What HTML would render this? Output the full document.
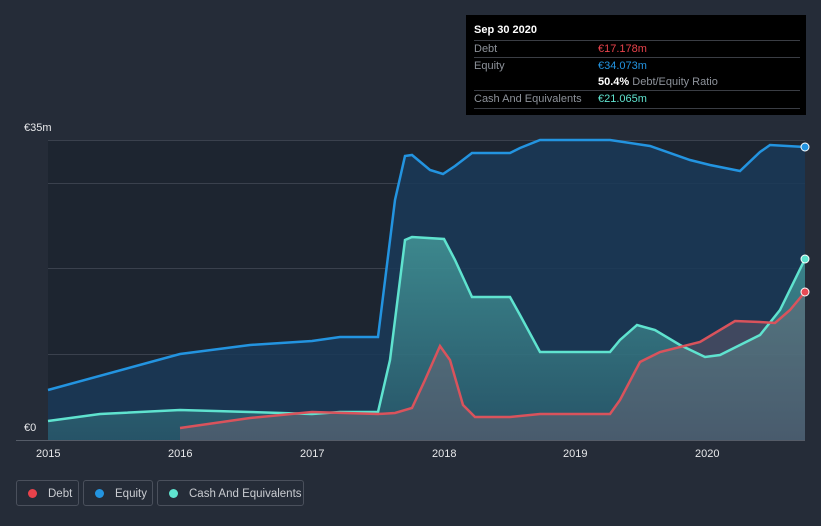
<!DOCTYPE html><html><head><style>body{margin:0;width:821px;height:526px;background:#252c38;font-family:"Liberation Sans",sans-serif;overflow:hidden;position:relative}
.tt{position:absolute;left:466px;top:15px;width:340px;height:100px;background:#000;font-size:11px;color:#8d929a}
.r{position:absolute;left:8px;right:6px;border-top:1px solid #3a3d44;height:17px;line-height:17px}
.l{position:absolute;top:480px;height:26px;border:1px solid #4a505c;border-radius:3px;color:#c9ccd1;font-size:11.5px;line-height:26px;box-sizing:border-box;white-space:nowrap}
.l i{display:inline-block;width:9px;height:9px;border-radius:50%;margin:0 11px 0 11px;vertical-align:-1px}
.ax{position:absolute;top:448px;color:#e8e9eb;font-size:11px}</style></head><body>
<svg width="821" height="526" style="position:absolute;left:0;top:0">
<defs><linearGradient id="g" x1="0" y1="0" x2="0" y2="1"><stop offset="0" stop-color="#5fd9c8" stop-opacity=".5"/><stop offset="1" stop-color="#5fd9c8" stop-opacity=".18"/></linearGradient></defs>
<rect x="48" y="140" width="757" height="300" fill="#1d2530"/>
<g stroke="#3a414d" stroke-width="1"><line x1="48" y1="140.5" x2="805" y2="140.5"/><line x1="48" y1="183.5" x2="805" y2="183.5"/><line x1="48" y1="268.5" x2="805" y2="268.5"/><line x1="48" y1="354.5" x2="805" y2="354.5"/></g>
<path d="M48,390 L180,354 L250,345 L312,341 L340,337 L378,337 L395,200 L405,156 L412,155 L430,170 L443,174 L455,166 L472,153 L510,153 L520,148 L540,140 L610,140 L650,146 L690,160 L710,165 L740,171 L760,152 L770,145 L805,147 L805,440 L48,440Z" fill="#1a3a58" fill-opacity=".85"/>
<path d="M48,421 L100,414 L180,410 L250,412 L312,414 L340,412 L378,412 L390,360 L405,240 L412,237 L444,239 L455,260 L472,297 L510,297 L520,315 L540,352 L610,352 L620,340 L637,325 L655,330 L680,345 L705,357 L720,355 L760,335 L780,310 L805,259 L805,440 L48,440Z" fill="url(#g)"/>
<path d="M180,428 L250,418 L312,412 L378,414 L395,413 L412,408 L425,380 L440,346 L450,360 L463,405 L475,417 L510,417 L540,414 L610,414 L620,400 L640,362 L660,352 L700,342 L735,321 L760,322 L775,323 L790,310 L805,292 L805,440 L180,440Z" fill="#8a6a78" fill-opacity=".35"/>
<path d="M48,390 L180,354 L250,345 L312,341 L340,337 L378,337 L395,200 L405,156 L412,155 L430,170 L443,174 L455,166 L472,153 L510,153 L520,148 L540,140 L610,140 L650,146 L690,160 L710,165 L740,171 L760,152 L770,145 L805,147" fill="none" stroke="#2394e0" stroke-width="2.5"/>
<path d="M48,421 L100,414 L180,410 L250,412 L312,414 L340,412 L378,412 L390,360 L405,240 L412,237 L444,239 L455,260 L472,297 L510,297 L520,315 L540,352 L610,352 L620,340 L637,325 L655,330 L680,345 L705,357 L720,355 L760,335 L780,310 L805,259" fill="none" stroke="#5fe3cf" stroke-width="2.5"/>
<path d="M180,428 L250,418 L312,412 L378,414 L395,413 L412,408 L425,380 L440,346 L450,360 L463,405 L475,417 L510,417 L540,414 L610,414 L620,400 L640,362 L660,352 L700,342 L735,321 L760,322 L775,323 L790,310 L805,292" fill="none" stroke="#d9535c" stroke-width="2.5"/>
<line x1="16" y1="440.5" x2="805" y2="440.5" stroke="#555c68"/>
<circle cx="805" cy="147" r="4" fill="#2394e0" stroke="#fff" stroke-width="1"/>
<circle cx="805" cy="259" r="4" fill="#5fe3cf" stroke="#fff" stroke-width="1"/>
<circle cx="805" cy="292" r="4" fill="#e84a55" stroke="#fff" stroke-width="1"/>
</svg>
<div style="position:absolute;left:24px;top:122px;color:#e8e9eb;font-size:11px">€35m</div>
<div style="position:absolute;left:24px;top:422px;color:#e8e9eb;font-size:11px">€0</div>
<div class="ax" style="left:36px">2015</div><div class="ax" style="left:168px">2016</div><div class="ax" style="left:300px">2017</div><div class="ax" style="left:432px">2018</div><div class="ax" style="left:563px">2019</div><div class="ax" style="left:695px">2020</div>
<div class="tt"><div style="position:absolute;left:8px;top:9px;color:#fff;font-weight:bold">Sep 30 2020</div>
<div class="r" style="top:25px">Debt<span style="position:absolute;left:124px;color:#e8424b">€17.178m</span></div>
<div class="r" style="top:42px">Equity<span style="position:absolute;left:124px;color:#2394e0">€34.073m</span></div>
<div style="position:absolute;left:132px;top:59px;line-height:17px"><b style="color:#fff">50.4%</b> Debt/Equity Ratio</div>
<div class="r" style="top:75px">Cash And Equivalents<span style="position:absolute;left:124px;color:#5fe3cf">€21.065m</span></div>
<div class="r" style="top:93px;height:0"></div></div>
<div class="l" style="left:16px;width:63px"><i style="background:#e8424b"></i>Debt</div>
<div class="l" style="left:83px;width:70px"><i style="background:#2394e0"></i>Equity</div>
<div class="l" style="left:157px;width:147px"><i style="background:#5fe3cf"></i>Cash And Equivalents</div>
</body></html>
